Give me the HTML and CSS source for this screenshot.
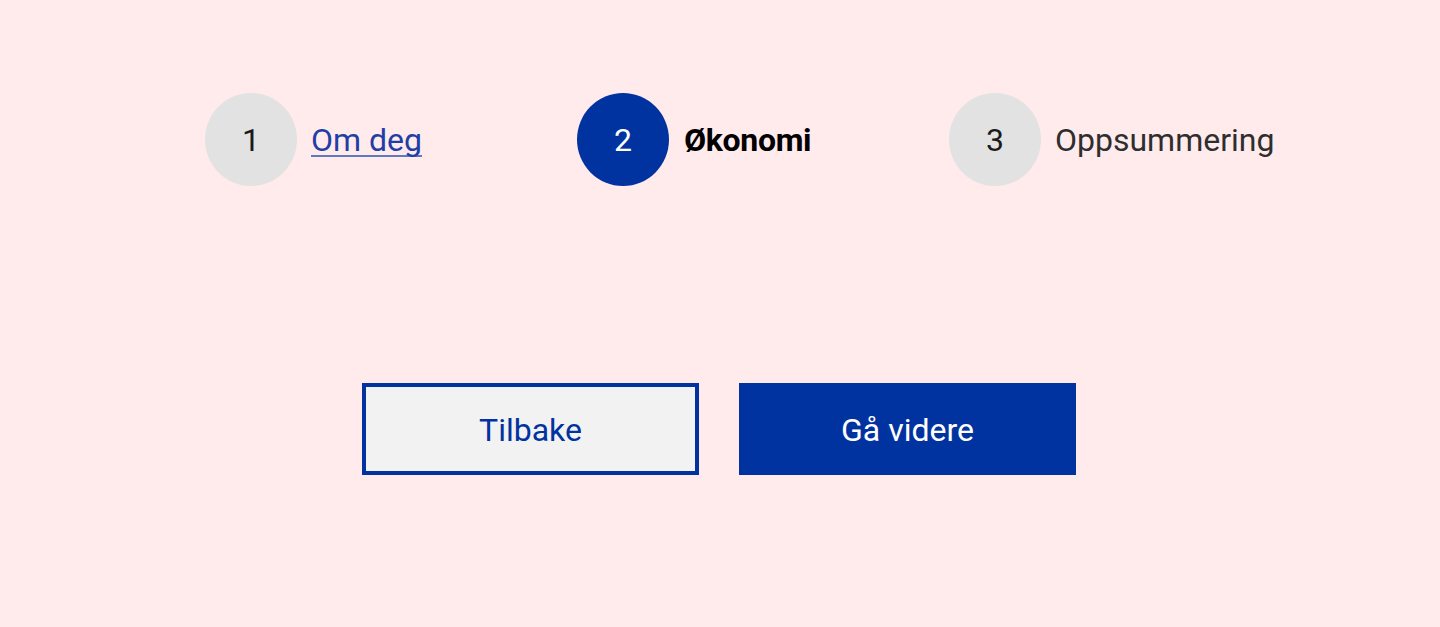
FILE: index.html
```html
<!DOCTYPE html>
<html lang="nb">
<head>
    <meta charset="UTF-8">
    <meta name="viewport" content="width=device-width, initial-scale=1.0">
    <title>Økonomi</title>
    <link rel="stylesheet" href="styles.css">
</head>
<body>

<div class="page">
    <ol class="steps">
        <li class="step done">
            <span class="step-number">1</span>
            <a href="#" class="step-label">Om deg</a>
        </li>
        <li class="step active">
            <span class="step-number">2</span>
            <span class="step-label">Økonomi</span>
        </li>
        <li class="step">
            <span class="step-number">3</span>
            <span class="step-label">Oppsummering</span>
        </li>
    </ol>

    <div class="actions">
        <button class="btn btn-secondary">Tilbake</button>
        <button class="btn btn-primary">Gå videre</button>
    </div>
</div>

</body>
</html>
```

FILE: styles.css
```css
body {
    font-family: Roboto, 'Liberation Sans', Arial, sans-serif;
    margin: 0;
    padding: 0;
    background-color: #ffebec;
}

.page {
    padding-top: 93px;
}

.steps {
    display: grid;
    grid-template-columns: repeat(3, 372px);
    list-style: none;
    margin: 0;
    padding: 0 0 0 205px;
}

.step {
    display: flex;
    align-items: center;
    gap: 14px;
}

.step-number {
    width: 92px;
    height: 93px;
    border-radius: 50%;
    background-color: #e2e2e2;
    color: #1a1a1a;
    font-size: 32px;
    display: flex;
    align-items: center;
    justify-content: center;
    flex-shrink: 0;
}

.step-label {
    font-size: 32px;
    color: #2e2e2e;
}

.step.done .step-label {
    color: #1f3fa6;
    text-decoration: underline;
    text-decoration-thickness: 2px;
    text-decoration-skip-ink: none;
    text-decoration-color: #6079c2;
    text-underline-offset: 4px;
}

.step.active .step-number {
    background-color: #0033a0;
    color: white;
}

.step.active .step-label {
    color: black;
    font-weight: bold;
    letter-spacing: -0.3px;
    margin-left: 1px;
}

.actions {
    display: flex;
    justify-content: center;
    gap: 40px;
    margin-top: 197px;
    padding-right: 2px;
}

.btn {
    width: 337px;
    height: 92px;
    padding-top: 3px;
    font-family: inherit;
    font-size: 32px;
    cursor: pointer;
    box-sizing: border-box;
}

.btn-secondary {
    background: #f2f2f2;
    border: 4px solid #0033a0;
    color: #0033a0;
}

.btn-primary {
    background: #0033a0;
    border: none;
    color: white;
}
```
